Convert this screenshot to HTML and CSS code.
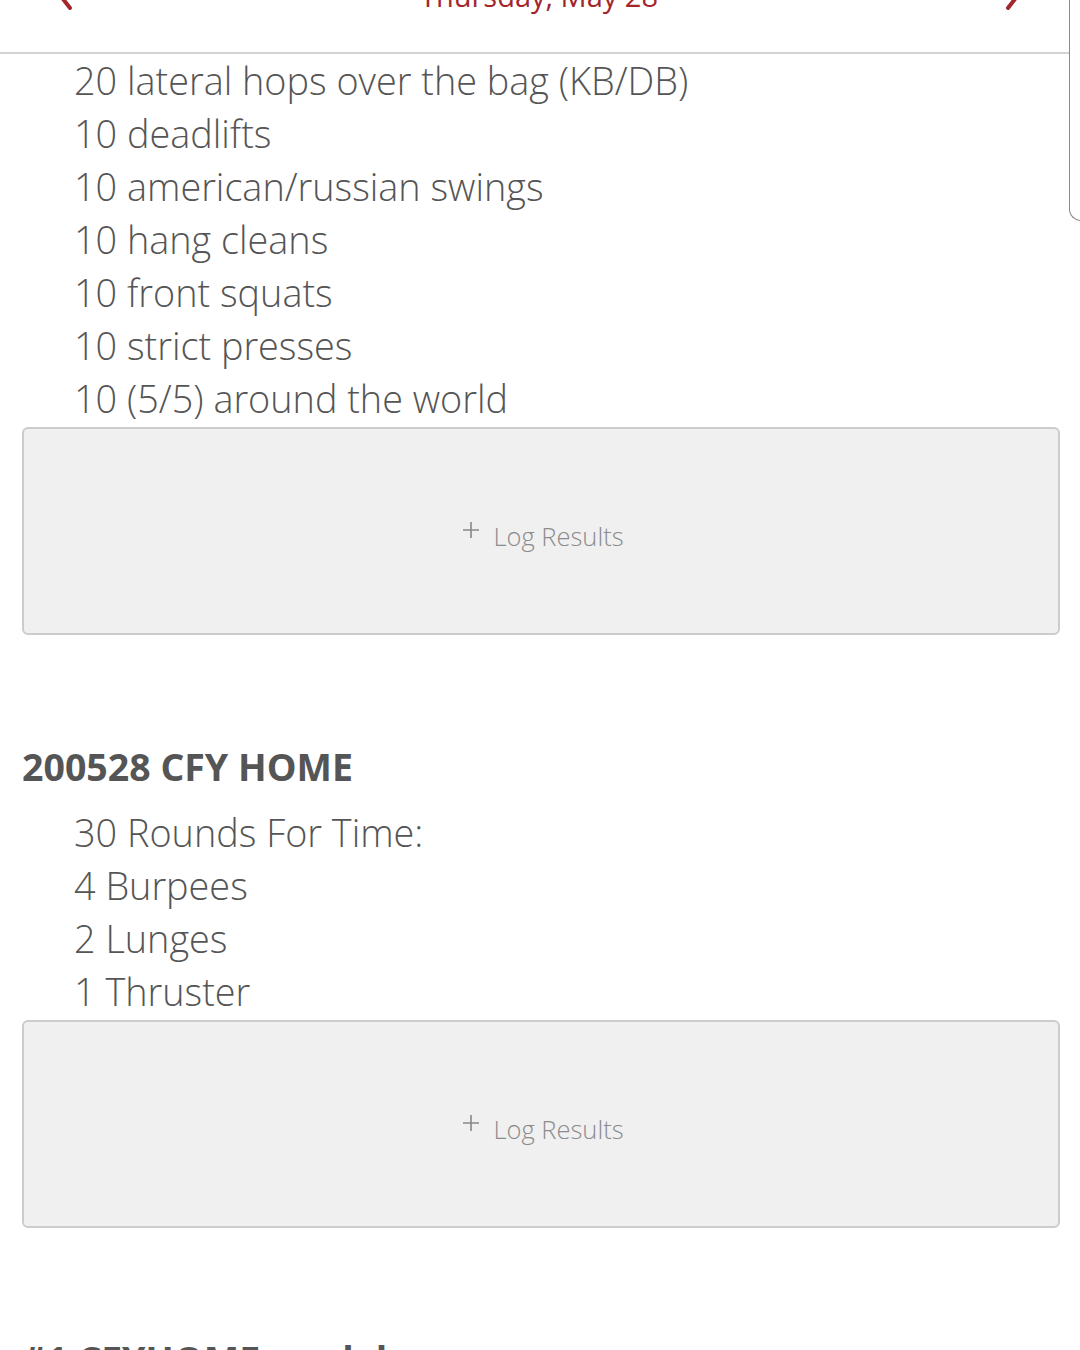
FILE: index.html
```html
<!DOCTYPE html>
<html>
<head>
<meta charset="utf-8">
<link rel="stylesheet" href="styles.css">
</head>
<body>
<header class="topbar">
  <div class="topbar-row">
    <svg class="chev chev-left" width="24" height="44" viewBox="0 0 24 44"><path d="M20 -2 L6 16 L20 34" fill="none" stroke="#a3262c" stroke-width="4" stroke-linecap="round" stroke-linejoin="round"/></svg>
    <div class="date">Thursday, May 28</div>
    <svg class="chev chev-right" width="24" height="44" viewBox="0 0 24 44"><path d="M4 -2 L18 16 L4 34" fill="none" stroke="#a3262c" stroke-width="4" stroke-linecap="round" stroke-linejoin="round"/></svg>
  </div>
</header>
<div class="edge"></div>
<main class="content">
  <section class="workout first">
    <ul class="lines">
      <li>20 lateral hops over the bag (KB/DB)</li>
      <li>10 deadlifts</li>
      <li>10 american/russian swings</li>
      <li>10 hang cleans</li>
      <li>10 front squats</li>
      <li>10 strict presses</li>
      <li>10 (5/5) around the world</li>
    </ul>
    <button class="log">
      <svg width="18" height="18" viewBox="0 0 18 18"><path d="M9 1 V17 M1 9 H17" stroke="#888" stroke-width="1.6"/></svg>
      <span>Log Results</span>
    </button>
  </section>
  <section class="workout">
    <h2 class="title">200528 CFY HOME</h2>
    <ul class="lines">
      <li>30 Rounds For Time:</li>
      <li>4 Burpees</li>
      <li>2 Lunges</li>
      <li>1 Thruster</li>
    </ul>
    <button class="log">
      <svg width="18" height="18" viewBox="0 0 18 18"><path d="M9 1 V17 M1 9 H17" stroke="#888" stroke-width="1.6"/></svg>
      <span>Log Results</span>
    </button>
  </section>
  <section class="workout">
    <h2 class="title">#1 CFYHOME model</h2>
  </section>
</main>
</body>
</html>
```
FILE: styles.css
```css
html, body {
  margin: 0;
  padding: 0;
  background: #ffffff;
  overflow: hidden;
}
body {
  font-family: "Open Sans", "Liberation Sans", sans-serif;
  color: #555555;
  width: 1080px;
  height: 1350px;
  position: relative;
}
.topbar {
  display: flow-root;
  height: 52px;
  width: 1069px;
  border-bottom: 2px solid #d2d2d2;
}
.topbar-row {
  display: flex;
  align-items: center;
  justify-content: space-between;
  margin-top: -28px;
  height: 48px;
  padding: 0 41px 0 50px;
}
.chev {
  overflow: visible;
}
.date {
  font-size: 29px;
  color: #a3262c;
  line-height: 48px;
}
.edge {
  position: absolute;
  left: 1069px;
  top: -20px;
  width: 30px;
  height: 240px;
  border-left: 1px solid #8a8a8a;
  border-bottom: 1px solid #8a8a8a;
  border-bottom-left-radius: 12px;
}
.content {
  padding: 0 20px 0 22px;
}
.lines {
  list-style: none;
  margin: 0;
  padding: 0 0 0 52px;
  font-size: 37.8px;
  font-weight: 300;
  line-height: 53px;
  color: #555;
}
.workout.first .lines {
  margin-bottom: 2px;
}
.title {
  margin: 107px 0 14px 0;
  font-size: 37.5px;
  font-weight: 700;
  line-height: 50px;
  color: #555;
}
.workout + .workout .lines {
  margin-bottom: 2px;
}
.log {
  display: flex;
  align-items: center;
  justify-content: center;
  gap: 13px;
  width: 100%;
  height: 208px;
  box-sizing: border-box;
  background: #f0f0f0;
  border: 2px solid #cccccc;
  border-radius: 6px;
  font-family: "Open Sans", "Liberation Sans", sans-serif;
  font-size: 25.5px;
  font-weight: 300;
  color: #8c8c8c;
  padding: 0;
}
.log svg {
  margin-top: -2px;
  margin-left: 4px;
}
.log span {
  margin-top: 10px;
}
```
